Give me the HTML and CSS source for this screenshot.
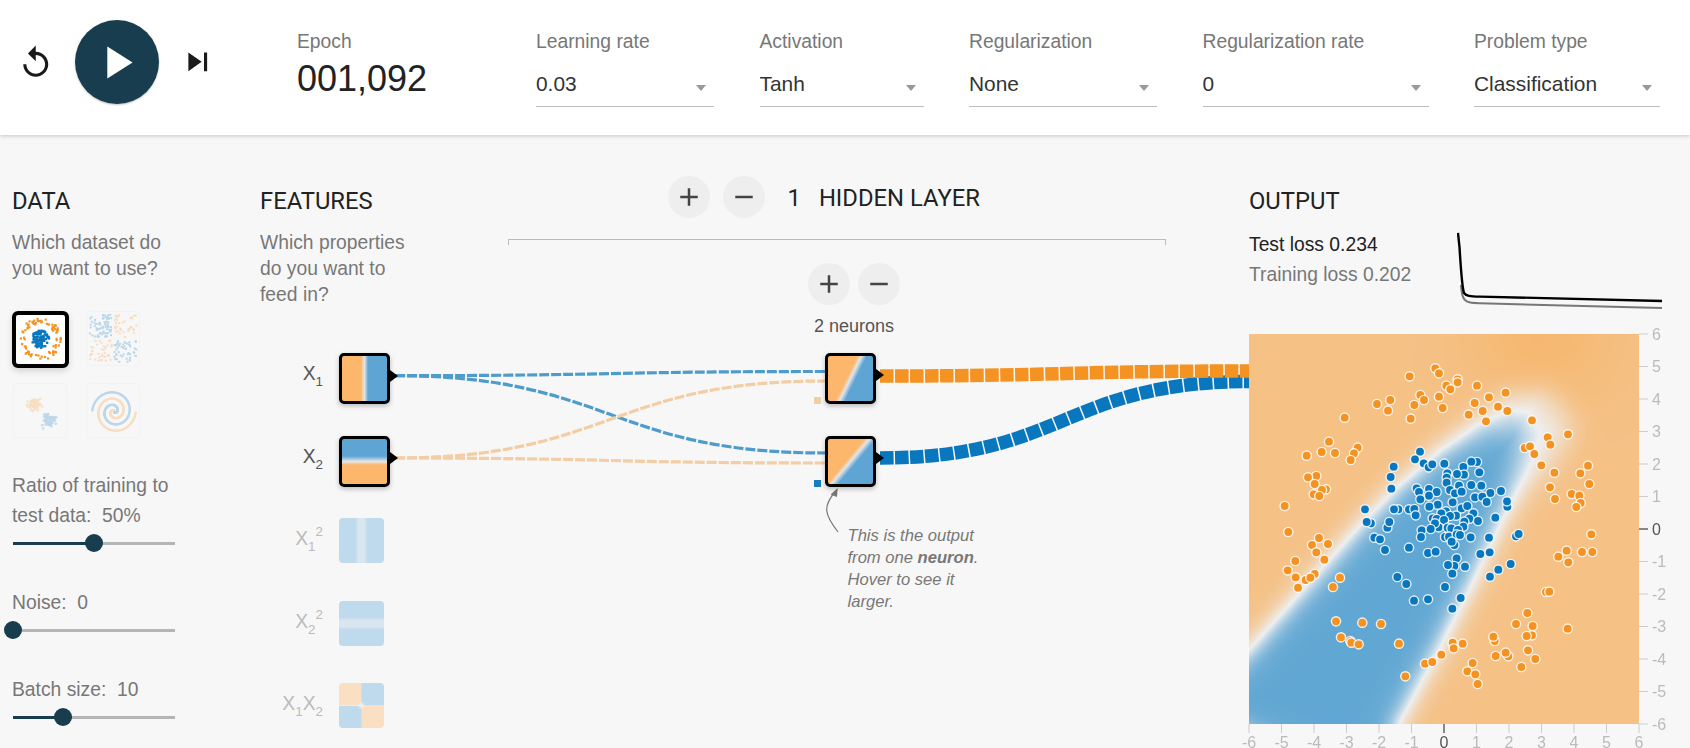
FILE: index.html
```html
<!DOCTYPE html>
<html lang="en">
<head>
	<meta charset="UTF-8">
	<meta name="viewport" content="width=device-width, initial-scale=1.0">
	<title>Neural network playground</title>
	<link rel="stylesheet" href="styles.css">
</head>
<body>
	<header class="top">
		<div class="controls">
			<button class="icon-btn reset">
				<svg viewBox="0 0 24 24"><path d="M12 5V1L7 6l5 5V7c3.31 0 6 2.69 6 6s-2.69 6-6 6-6-2.69-6-6H4c0 4.42 3.58 8 8 8s8-3.58 8-8-3.58-8-8-8z"/></svg>
			</button>
			<button class="play">
				<svg viewBox="0 0 24 24"><path d="M8 5v14l11-7z"/></svg>
			</button>
			<button class="icon-btn step">
				<svg viewBox="0 0 24 24"><path d="M6 18l8.5-6L6 6v12zM16 6v12h2V6h-2z"/></svg>
			</button>
		</div>
		<div class="epoch">
			<span class="field-label">Epoch</span>
			<span class="epoch-num">001,092</span>
		</div>
		<div class="field w-rate">
			<label class="field-label">Learning rate</label>
			<div class="select"><select><option>0.03</option></select></div>
		</div>
		<div class="field w-act">
			<label class="field-label">Activation</label>
			<div class="select"><select><option>Tanh</option></select></div>
		</div>
		<div class="field w-reg">
			<label class="field-label">Regularization</label>
			<div class="select"><select><option>None</option></select></div>
		</div>
		<div class="field w-regrate">
			<label class="field-label">Regularization rate</label>
			<div class="select"><select><option>0</option></select></div>
		</div>
		<div class="field w-type">
			<label class="field-label">Problem type</label>
			<div class="select"><select><option>Classification</option></select></div>
		</div>
	</header>

	<main class="main">
		<svg class="wires" viewBox="0 135 1690 613">
			<g class="wire-thin">
				<path class="blue" d="M395 375.7C610 375.7 610 371.5 825 371.5"/>
				<path class="blue" d="M395 375.7C610 375.7 610 453 825 453"/>
				<path class="orange" d="M395 458C610 458 610 381 825 381"/>
				<path class="orange" d="M395 458C610 458 610 463 825 463"/>
			</g>
			<g class="wire-thick">
				<path class="blue" d="M880 458C1065 458 1065 381.5 1250 381.5"/>
				<path class="orange" d="M880 376C1065 376 1065 371 1250 371"/>
			</g>
			<path class="note-arrow" d="M838 532C824 514 823 506 835 492"/>
			<path class="note-head" d="M837.7 488L830.6 494.5L837 497z"/>
		</svg>

		<section class="col col-data">
			<h2>DATA</h2>
			<p class="hint">Which dataset do<br>you want to use?</p>
			<div class="datasets">
				<canvas class="dataset selected" id="ds-circle" width="49" height="49"></canvas>
				<canvas class="dataset" id="ds-xor" width="52" height="53"></canvas>
				<canvas class="dataset" id="ds-gauss" width="53" height="53"></canvas>
				<canvas class="dataset" id="ds-spiral" width="52" height="53"></canvas>
			</div>
			<div class="ctl ctl-first">
				<label>Ratio of training to<br>test data:&nbsp; 50%</label>
				<div class="slider"><div class="fill" style="width:81px"></div></div>
			</div>
			<div class="ctl">
				<label>Noise:&nbsp; 0</label>
				<div class="slider"><div class="fill" style="width:0"></div></div>
			</div>
			<div class="ctl">
				<label>Batch size:&nbsp; 10</label>
				<div class="slider"><div class="fill" style="width:50px"></div></div>
			</div>
		</section>

		<section class="col col-features">
			<h2>FEATURES</h2>
			<p class="hint">Which properties<br>do you want to<br>feed in?</p>
			<div class="feature-list">
				<div class="feature">
					<span class="flabel on">X<sub>1</sub></span>
					<div class="node f-x1"></div>
				</div>
				<div class="feature">
					<span class="flabel on">X<sub>2</sub></span>
					<div class="node f-x2"></div>
				</div>
				<div class="feature">
					<span class="flabel">X<sub>1</sub><sup>2</sup></span>
					<div class="node-off f-x1sq"></div>
				</div>
				<div class="feature">
					<span class="flabel">X<sub>2</sub><sup>2</sup></span>
					<div class="node-off f-x2sq"></div>
				</div>
				<div class="feature">
					<span class="flabel">X<sub>1</sub>X<sub>2</sub></span>
					<div class="node-off f-x1x2"></div>
				</div>
			</div>
		</section>

		<section class="col col-network">
			<div class="layer-head">
				<button class="round"><svg viewBox="0 0 24 24"><path d="M19 13h-6v6h-2v-6H5v-2h6V5h2v6h6v2z"/></svg></button>
				<button class="round"><svg viewBox="0 0 24 24"><path d="M19 13H5v-2h14v2z"/></svg></button>
				<span class="layer-title"><span>1</span><span>HIDDEN LAYER</span></span>
			</div>
			<div class="bracket"></div>
			<div class="neuron-ctl">
				<button class="round"><svg viewBox="0 0 24 24"><path d="M19 13h-6v6h-2v-6H5v-2h6V5h2v6h6v2z"/></svg></button>
				<button class="round"><svg viewBox="0 0 24 24"><path d="M19 13H5v-2h14v2z"/></svg></button>
			</div>
			<div class="neuron-count">2 neurons</div>
			<div class="neurons">
				<div class="node n-1"><i class="bias bias-orange"></i></div>
				<div class="node n-2"><i class="bias bias-blue"></i></div>
			</div>
			<p class="note">This is the output<br>from one <b>neuron</b>.<br>Hover to see it<br>larger.</p>
		</section>

		<section class="col col-output">
			<h2>OUTPUT</h2>
			<div class="stats">
				<div class="losses">
					<div class="test-loss">Test loss 0.234</div>
					<div class="train-loss">Training loss 0.202</div>
				</div>
				<svg class="loss-chart" viewBox="1457 231 206 80">
					<path class="line-train" d="M1461 285C1462 296 1463 298 1465 300C1468 303 1472 303 1480 303.3L1662 308"/>
					<path class="line-test" d="M1458 233L1459.5 247C1461 272 1462 287 1464 293C1466 296 1470 296.3 1480 296.6L1662 301"/>
				</svg>
			</div>
			<div class="plot">
				<canvas id="heatmap" width="390" height="390"></canvas>
				<svg class="plot-over" id="plot-over" width="390" height="390"></svg>
			</div>
		</section>
	</main>

	<script src="script.js"></script>
</body>
</html>
```

FILE: styles.css
```css
*, *:before, *:after {
	box-sizing: border-box;
}
html, body {
	margin: 0;
	height: 748px;
	overflow: hidden;
}
body {
	background: #f7f7f7;
	font-family: "Liberation Sans", Arial, sans-serif;
	font-size: 19.3px;
	color: #777;
}
button {
	border: 0;
	padding: 0;
	background: none;
	display: block;
}
h2 {
	margin: 11.5px 0 0;
	font-family: Roboto, sans-serif;
	font-weight: 400;
	font-size: 23.8px;
	line-height: 26px;
	color: #222;
}

/* top bar */
.top {
	position: relative;
	z-index: 3;
	height: 135px;
	background: #fff;
	box-shadow: 0 1px 4px rgba(0, 0, 0, .2);
	display: flex;
	gap: 45.5px;
	padding-top: 31px;
}
.controls {
	display: flex;
	align-items: center;
	gap: 20px;
	height: 84px;
	margin-top: -11px;
	margin-left: 17px;
	margin-right: 35.5px;
}
.icon-btn {
	width: 37.5px;
	height: 37.5px;
}
.icon-btn svg {
	display: block;
	width: 100%;
	height: 100%;
	fill: #1a1a1a;
}
.reset {
	margin-top: 2px;
}
.play {
	width: 84px;
	height: 84px;
	border-radius: 50%;
	background: #183d4e;
	box-shadow: 0 1px 2px rgba(0, 0, 0, .25);
	display: flex;
	align-items: center;
	justify-content: center;
}
.play svg {
	width: 55px;
	height: 55px;
	fill: #fff;
}
.field-label {
	display: block;
	line-height: 22px;
	font-size: 19.3px;
	color: #777;
}
.epoch {
	width: 193.5px;
}
.epoch-num {
	display: block;
	margin-top: 5px;
	font-size: 36px;
	line-height: 42px;
	color: #222;
}
.select {
	position: relative;
	height: 54px;
	border-bottom: 1px solid #bdbdbd;
}
.select select {
	display: block;
	width: 100%;
	height: 53px;
	padding: 8.6px 0 0;
	margin: 0;
	border: 0;
	outline: 0;
	background: none;
	appearance: none;
	font: inherit;
	font-size: 20.9px;
	color: #333;
}
.select:after {
	content: "";
	position: absolute;
	right: 8px;
	top: 32px;
	border-left: 5.5px solid transparent;
	border-right: 5.5px solid transparent;
	border-top: 6px solid #999;
}
.w-rate { width: 178px; }
.w-act { width: 164px; }
.w-reg { width: 188px; }
.w-regrate { width: 226px; }
.w-type { width: 186px; }

/* columns */
.main {
	position: relative;
	display: grid;
	grid-template-columns: 248px 248px 741px 1fr;
	padding: 41px 0 0 12px;
}
.wires {
	position: absolute;
	left: 0;
	top: 0;
	width: 1690px;
	height: 613px;
}
.wires path {
	fill: none;
}
.wire-thin path {
	stroke-width: 3.2px;
	stroke-dasharray: 10 2;
}
.wire-thin .blue {
	stroke: #4e9ccc;
}
.wire-thin .orange {
	stroke: #f3cda3;
}
.wire-thick path {
	stroke-width: 13.5px;
	stroke-dasharray: 13.5 1.5;
}
.wire-thick .blue {
	stroke: #0877bd;
}
.wire-thick .orange {
	stroke: #f59322;
}
.wires .note-arrow {
	stroke: #777;
	stroke-width: 1.2px;
}
.wires .note-head {
	fill: #777;
}
.col {
	position: relative;
}
.hint {
	margin: 16px 0 0;
	line-height: 26.4px;
}

/* data column */
.datasets {
	display: grid;
	grid-template-columns: 57px 57px;
	gap: 15px 16px;
	margin-top: 28.7px;
}
.dataset {
	display: block;
	width: 54px;
	height: 55px;
	margin-left: 1px;
	border: 1px solid #e4e4e4;
	border-radius: 4px;
	opacity: .25;
}
.dataset.selected {
	width: 57px;
	height: 57px;
	margin-left: 0;
	border: 4px solid #000;
	border-radius: 6px;
	background: #fff;
	opacity: 1;
	box-shadow: 0 3px 6px rgba(0, 0, 0, .15);
}
.ctl {
	margin-top: 43.7px;
}
.ctl-first {
	margin-top: 33px;
}
.ctl label {
	display: block;
	line-height: 30px;
}
.slider {
	position: relative;
	width: 162px;
	height: 3px;
	margin: 10.5px 0 0 1px;
	background: #b5b5b5;
}
.fill {
	position: relative;
	height: 3px;
	background: #183d4e;
}
.fill:after {
	content: "";
	position: absolute;
	right: -9px;
	top: -7.5px;
	width: 18px;
	height: 18px;
	border-radius: 50%;
	background: #183d4e;
}

/* features */
.feature-list {
	margin-top: 44.3px;
}
.feature {
	display: flex;
	align-items: flex-start;
	gap: 16px;
	height: 82.6px;
}
.flabel {
	width: 63px;
	line-height: 42px;
	text-align: right;
	white-space: nowrap;
	color: #bbb;
	font-size: 19.3px;
}
.flabel.on {
	color: #555;
}
.flabel sub, .flabel sup {
	font-size: 13.4px;
	line-height: 0;
}
.flabel sub {
	vertical-align: -6px;
}
.flabel sup {
	vertical-align: 9px;
}
.node {
	position: relative;
	flex: none;
	width: 51px;
	height: 51px;
	border: 3.5px solid #000;
	border-radius: 5px;
	box-shadow: 0 2px 5px rgba(0, 0, 0, .25);
}
.node:after {
	content: "";
	position: absolute;
	right: -11px;
	top: 13.5px;
	border-left: 8px solid #000;
	border-top: 6px solid transparent;
	border-bottom: 6px solid transparent;
}
.node-off {
	flex: none;
	width: 45px;
	height: 45px;
	border-radius: 4px;
}
.f-x1 {
	background: linear-gradient(90deg, #fcb76c 0, #fcb76c 42%, #e3e5e6 50%, #5fa5d4 58%, #5fa5d4 100%);
}
.f-x2 {
	background: linear-gradient(180deg, #5fa5d4 0, #5fa5d4 38%, #e3e5e6 50%, #fcb76c 58%, #fcb76c 100%);
}
.f-x1sq {
	background: linear-gradient(90deg, #bfd9ed 0, #bfd9ed 36%, #d8e6f0 43%, #d8e6f0 57%, #bfd9ed 64%, #bfd9ed 100%);
}
.f-x2sq {
	background: linear-gradient(180deg, #bfd9ed 0, #bfd9ed 36%, #d8e6f0 43%, #d8e6f0 57%, #bfd9ed 64%, #bfd9ed 100%);
}
.f-x1x2 {
	background:
		radial-gradient(circle at 50% 50%, #f2f2f2 0, rgba(242, 242, 242, 0) 14%),
		linear-gradient(90deg, #fbdfc2 48%, #bfd9ed 52%) top / 100% 50% no-repeat,
		linear-gradient(90deg, #bfd9ed 48%, #fbdfc2 52%) bottom / 100% 50% no-repeat;
}

/* network */
.layer-head {
	display: flex;
	align-items: center;
	gap: 13px;
	margin-left: 160px;
	height: 42px;
}
.round {
	width: 42px;
	height: 42px;
	border-radius: 50%;
	background: #eee;
	display: flex;
	align-items: center;
	justify-content: center;
	flex: none;
}
.round svg {
	width: 30px;
	height: 30px;
	fill: #444;
}
.layer-title {
	display: flex;
	gap: 18px;
	margin: 2px 0 0 9.5px;
	font-family: Roboto, sans-serif;
	font-size: 23.8px;
	color: #222;
}
.bracket {
	width: 658px;
	height: 6px;
	margin-top: 20.7px;
	border: 1px solid #bbb;
	border-bottom: 0;
}
.neuron-ctl {
	display: flex;
	gap: 8px;
	margin: 18.3px 0 0 300px;
}
.neuron-count {
	width: 92px;
	margin: 9.7px 0 0 300px;
	line-height: 22px;
	font-size: 18px;
	text-align: center;
	white-space: nowrap;
	color: #555;
}
.neurons {
	display: flex;
	flex-direction: column;
	gap: 32px;
	margin: 16.3px 0 0 317px;
}
.n-1 {
	background: linear-gradient(116deg, #fcb76c 0, #fcb76c 44%, #e3e5e6 50%, #5fa5d4 58%, #5fa5d4 100%);
}
.n-2 {
	background: linear-gradient(130deg, #fcb76c 0, #fcb76c 44%, #e3e5e6 50%, #5fa5d4 58%, #5fa5d4 100%);
}
.bias {
	position: absolute;
	left: -14.5px;
	bottom: -3.5px;
	width: 7.5px;
	height: 7.5px;
}
.bias-orange {
	background: #f3cda3;
}
.bias-blue {
	background: #1a7cbf;
}
.note {
	margin: 37.7px 0 0 339.5px;
	font-size: 16.6px;
	font-style: italic;
	line-height: 22px;
	color: #777;
}

/* output */
.col-output {
	z-index: 1;
}
.stats {
	display: flex;
	height: 80px;
	margin-top: 16.5px;
}
.losses {
	width: 208px;
	line-height: 30px;
}
.test-loss {
	color: #222;
}
.loss-chart {
	display: block;
	width: 206px;
	height: 80px;
	margin-top: 1px;
}
.loss-chart path {
	fill: none;
}
.line-test {
	stroke: #000;
	stroke-width: 2.4px;
}
.line-train {
	stroke: #777;
	stroke-width: 2px;
}
.plot {
	position: relative;
	width: 390px;
	height: 390px;
	margin-top: 24px;
}
#heatmap {
	display: block;
}
.plot-over {
	position: absolute;
	left: 0;
	top: 0;
	overflow: visible;
}
.tick {
	stroke: #ccc;
	stroke-width: 1px;
}
.tick.zero {
	stroke: #888;
	stroke-width: 2px;
}
.tick-label {
	font-size: 16px;
	fill: #bbb;
}
.tick-label.zero {
	fill: #555;
}
.pt {
	stroke: #fff;
	stroke-opacity: .85;
	stroke-width: 1.4px;
}
.pt-orange {
	fill: #f59322;
}
.pt-blue {
	fill: #0877bd;
}
```

FILE: script.js
```js
var NEUTRAL = [238, 239, 240], ORANGE = [246, 184, 113], BLUE = [97, 167, 211];

// white contour of the output, in data units
var contour = [[-8, -5.6], [-6, -3.7], [-2.7, 0], [-1.45, 1.3], [-0.12, 2.43], [1.1, 3.26], [2, 3.65], [2.6, 3.6],
	[2.95, 2.95], [2.7, 2.1], [2.4, 1.5], [1.72, 0.18], [0.9, -1.57], [-0.12, -3.6], [-1.35, -5.88], [-2, -8]];

function signedDist(x, y) {
	var best = 1e9, inside = false;
	for (var i = 0, j = contour.length - 1; i < contour.length; j = i++) {
		var a = contour[j], b = contour[i];
		var dx = b[0] - a[0], dy = b[1] - a[1];
		var t = ((x - a[0]) * dx + (y - a[1]) * dy) / (dx * dx + dy * dy);
		t = Math.max(0, Math.min(1, t));
		var ex = a[0] + t * dx - x, ey = a[1] + t * dy - y;
		best = Math.min(best, ex * ex + ey * ey);
		if ((a[1] > y) !== (b[1] > y) && x < a[0] + (y - a[1]) / dy * dx) inside = !inside;
	}
	return (inside ? 1 : -1) * Math.sqrt(best);
}

function mix(a, b, t) {
	return [a[0] + (b[0] - a[0]) * t, a[1] + (b[1] - a[1]) * t, a[2] + (b[2] - a[2]) * t];
}

function drawHeatmap() {
	var ctx = document.getElementById('heatmap').getContext('2d');
	var img = ctx.createImageData(390, 390);
	for (var py = 0; py < 390; py++) {
		for (var px = 0; px < 390; px++) {
			var x = (px - 195) / 32.5, y = (195 - py) / 32.5;
			var soft = Math.exp(-((x - 3.2) * (x - 3.2) + (y - 3.2) * (y - 3.2)) / 4);
			var v = Math.tanh(signedDist(x, y) * (2.3 - 1.7 * soft));
			var c;
			if (v > 0) {
				c = mix(NEUTRAL, BLUE, v);
			} else {
				var mag = 0.84 + 0.16 * Math.exp(-((x - 3) * (x - 3) + (y - 6) * (y - 6)) / 5);
				c = mix(NEUTRAL, ORANGE, -v * mag);
			}
			var k = (py * 390 + px) * 4;
			img.data[k] = c[0];
			img.data[k + 1] = c[1];
			img.data[k + 2] = c[2];
			img.data[k + 3] = 255;
		}
	}
	ctx.putImageData(img, 0, 0);
}

// dots read off in 3x crops of the plot: [x0, y0, points]
var orangeDots = [
	[1240, 220, [[509,469],[586,445],[597,460],[653,478],[653,487],[619,497],[631,508],[711,497],[541,525],[552,540],[597,530],[747,532],[797,518],[411,552],[451,540],[444,572],[523,555],[608,564],[704,549],[774,560],[802,573],[728,573],[686,584],[738,604],[512,596],[314,593],[876,601],[984,643],[923,652],[931,674],[854,684],[870,679],[883,702],[267,665],[353,683],[342,700],[332,720],[245,696],[285,699],[200,707],[904,736],[943,758],[1044,737],[1021,760],[229,768],[204,772]]],
	[1240, 480, [[930,22],[1048,12],[224,12],[258,28],[246,30],[221,43],[238,48],[995,42],[1018,47],[945,57],[1022,69],[1009,81],[134,78],[145,156],[1054,163],[237,174],[264,192],[216,195],[229,217],[253,239],[166,243],[980,212],[1026,216],[1057,216],[955,230],[985,247],[143,271],[167,292],[224,282],[197,300],[211,293],[174,323],[300,293],[279,321],[918,336],[928,335],[862,399],[828,432],[878,438],[288,424],[367,428],[423,432],[764,483],[760,470],[876,466],[860,468],[983,446],[303,472],[331,483],[334,488],[356,493],[477,491],[638,488],[668,491],[641,505],[604,524],[864,511],[805,529],[797,518],[767,528],[886,537],[555,551],[577,546],[844,561],[698,549],[682,574],[706,583],[496,589],[713,612]]]
];
var blueDots = [
	[1340, 440, [[240,35],[225,58],[251,70],[266,82],[277,73],[313,71],[161,80],[152,111],[154,146],[411,66],[394,65],[370,81],[372,104],[351,102],[322,100],[320,113],[418,97],[320,128],[357,137],[394,135],[424,137],[230,145],[237,156],[267,147],[290,156],[330,150],[345,160],[365,155],[267,167],[241,178],[451,159],[483,153],[405,172],[427,170],[440,186],[338,187],[293,194],[502,200],[501,184],[268,200],[365,205],[382,198],[75,208],[175,208],[162,208],[207,208],[223,207],[227,226],[318,214],[304,220],[400,220],[348,227],[330,228],[278,235],[290,237],[312,240],[388,236],[414,243],[466,233],[373,245],[93,250],[80,246],[142,263],[148,246],[296,262],[285,250],[370,260],[245,271],[272,267],[323,263],[334,265],[354,270],[243,291],[315,291],[327,290],[350,283],[360,285],[392,292],[447,293],[528,289],[536,282],[103,293],[120,298],[343,315],[335,305],[135,330],[207,323],[264,339],[287,335],[421,342],[449,337],[350,355],[343,378],[324,375],[375,380],[512,372],[475,389],[337,401],[450,410],[172,411],[199,432],[315,441],[362,474],[222,482],[264,478]]],
	[1240, 480, [[637,386]]]
];

function el(parent, name, attrs, text) {
	var node = document.createElementNS('http://www.w3.org/2000/svg', name);
	for (var key in attrs) node.setAttribute(key, attrs[key]);
	if (text !== undefined) node.textContent = text;
	parent.appendChild(node);
	return node;
}

function drawDots(svg, sets, cls) {
	sets.forEach(function (set) {
		set[2].forEach(function (p) {
			el(svg, 'circle', {
				'class': 'pt ' + cls,
				cx: set[0] + p[0] / 3 - 1249,
				cy: set[1] + p[1] / 3 - 334,
				r: 4.6
			});
		});
	});
}

function drawAxes(svg) {
	for (var i = -6; i <= 6; i++) {
		var pos = 195 + i * 32.5, zero = i === 0 ? ' zero' : '';
		el(svg, 'line', {'class': 'tick' + zero, x1: 390, x2: 399, y1: pos, y2: pos});
		el(svg, 'line', {'class': 'tick' + zero, x1: pos, x2: pos, y1: 390, y2: 399});
		el(svg, 'text', {'class': 'tick-label' + zero, x: 403, y: 195 - i * 32.5 + 5.5}, i);
		el(svg, 'text', {'class': 'tick-label' + zero, x: pos, y: 414, 'text-anchor': 'middle'}, i);
	}
}

// small seeded random so the thumbnails stay the same on every load
var seed = 7;
function rnd() {
	seed = (seed * 16807) % 2147483647;
	return seed / 2147483647;
}
function gauss() {
	return (rnd() + rnd() + rnd() - 1.5) / 1.5;
}

function dotsOn(id, make) {
	var canvas = document.getElementById(id);
	var ctx = canvas.getContext('2d');
	make(function (x, y, color, size) {
		ctx.fillStyle = color;
		ctx.fillRect(x * canvas.width, y * canvas.height, size, size);
	});
}

var DOT_O = '#f59322', DOT_B = '#0877bd';

function drawDatasets() {
	dotsOn('ds-circle', function (dot) {
		for (var i = 0; i < 80; i++) {
			var a = rnd() * 6.283, r = 0.31 + rnd() * 0.12;
			dot(0.47 + r * Math.cos(a), 0.47 + r * Math.sin(a), DOT_O, 2.2);
		}
		for (var j = 0; j < 80; j++) {
			var b = rnd() * 6.283, s = Math.sqrt(rnd()) * 0.18;
			dot(0.47 + s * Math.cos(b), 0.47 + s * Math.sin(b), DOT_B, 2.4);
		}
	});
	dotsOn('ds-xor', function (dot) {
		for (var i = 0; i < 200; i++) {
			var x = rnd() * 0.43 + 0.03, y = rnd() * 0.43 + 0.03;
			var qx = rnd() < 0.5, qy = rnd() < 0.5;
			dot(qx ? x + 0.48 : x, qy ? y + 0.48 : y, qx === qy ? DOT_B : DOT_O, 2);
		}
	});
	dotsOn('ds-gauss', function (dot) {
		for (var i = 0; i < 70; i++) {
			dot(0.36 + gauss() * 0.2, 0.36 + gauss() * 0.15, DOT_O, 2.2);
			dot(0.64 + gauss() * 0.17, 0.67 + gauss() * 0.18, DOT_B, 2.2);
		}
	});
	dotsOn('ds-spiral', function (dot) {
		for (var i = 0; i < 260; i++) {
			var r = i / 260 * 0.42, t = 1.75 * i / 260 * 6.283;
			dot(0.5 + r * Math.sin(t), 0.5 + r * Math.cos(t), DOT_B, 2);
			dot(0.5 + r * Math.sin(t + 3.14), 0.5 + r * Math.cos(t + 3.14), DOT_O, 2);
		}
	});
}

drawHeatmap();
drawDatasets();
var over = document.getElementById('plot-over');
drawAxes(over);
drawDots(over, orangeDots, 'pt-orange');
drawDots(over, blueDots, 'pt-blue');
```
